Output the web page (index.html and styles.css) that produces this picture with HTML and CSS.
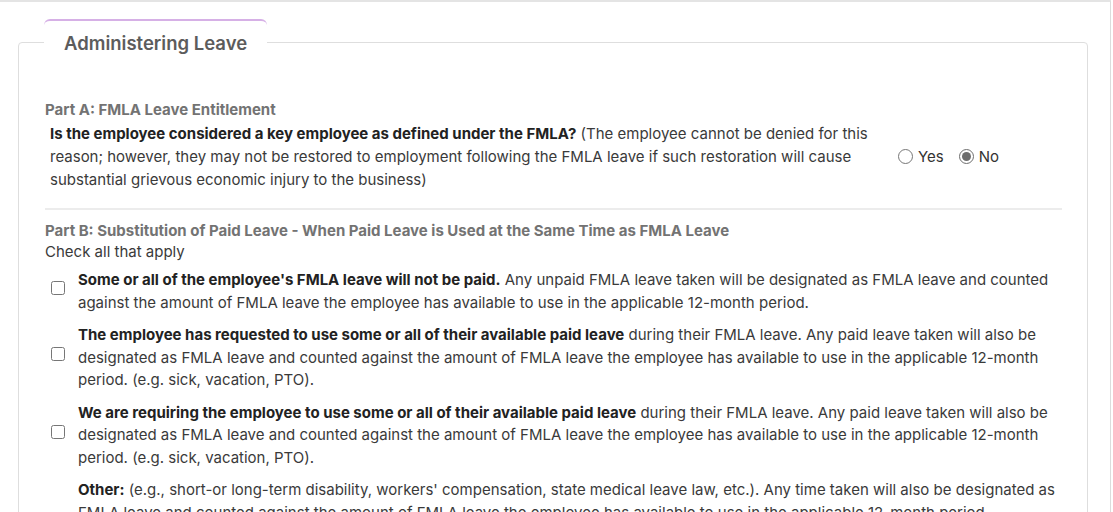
FILE: index.html
```html
<!DOCTYPE html>
<html lang="en">
<head>
  <meta charset="UTF-8" />
  <title>Administering Leave</title>
  <link rel="stylesheet" href="styles.css">
</head>
<body>
  <div class="pagina">
    <fieldset class="secao">
      <legend class="aba">Administering Leave</legend>

      <div class="parte">
        <div class="parte-titulo">Part A: FMLA Leave Entitlement</div>
        <div class="pergunta">
          <div class="pergunta-texto">
            <b>Is the employee considered a key employee as defined under the FMLA?</b>
            (The employee cannot be denied for this reason; however, they may not be restored to employment following the FMLA leave if such restoration will cause substantial grievous economic injury to the business)
          </div>
          <div class="opcoes">
            <label class="opcao"><input type="radio" name="chave" value="sim"> Yes</label>
            <label class="opcao"><input type="radio" name="chave" value="nao" checked> No</label>
          </div>
        </div>
      </div>

      <div class="divisor"></div>

      <div class="parte">
        <div class="parte-titulo">Part B: Substitution of Paid Leave - When Paid Leave is Used at the Same Time as FMLA Leave</div>
        <div class="dica">Check all that apply</div>

        <div class="itens">
          <label class="item">
            <input type="checkbox">
            <span><b>Some or all of the employee's FMLA leave will not be paid.</b> Any unpaid FMLA leave taken will be designated as FMLA leave and counted against the amount of FMLA leave the employee has available to use in the applicable 12-month period.</span>
          </label>
          <label class="item">
            <input type="checkbox">
            <span><b>The employee has requested to use some or all of their available paid leave</b> during their FMLA leave. Any paid leave taken will also be designated as FMLA leave and counted against the amount of FMLA leave the employee has available to use in the applicable 12-month period. (e.g. sick, vacation, PTO).</span>
          </label>
          <label class="item">
            <input type="checkbox">
            <span><b>We are requiring the employee to use some or all of their available paid leave</b> during their FMLA leave. Any paid leave taken will also be designated as FMLA leave and counted against the amount of FMLA leave the employee has available to use in the applicable 12-month period. (e.g. sick, vacation, PTO).</span>
          </label>
          <div class="item">
            <input type="checkbox">
            <div class="item-outro">
              <span><b>Other:</b> (e.g., short-or long-term disability, workers' compensation, state medical leave law, etc.). Any time taken will also be designated as FMLA leave and counted against the amount of FMLA leave the employee has available to use in the applicable 12-month period.</span>
              <input type="text" class="campo">
            </div>
          </div>
        </div>
      </div>
    </fieldset>
  </div>
</body>
</html>
```

FILE: styles.css
```css
body {
  margin: 0;
  background-color: #fff;
  color: #3a3a3a;
  font-family: Inter, "Noto Sans", sans-serif;
  font-size: 15px;
}

.pagina {
  width: 1111px;
  height: 512px;
  box-sizing: border-box;
  border-top: 2px solid #e4e4e4;
  border-right: 1px solid #dcdcdc;
  padding: 17px 22px 0 18px;
  overflow: hidden;
}

.secao {
  margin: 0;
  border: 1px solid #dedede;
  border-radius: 4px;
  padding: 35px 25px 40px 26px;
}

.aba {
  margin-left: -1px;
  padding: 11px 20px 11px 20px;
  background: #fff;
  border-top: 2px solid #d6b0e6;
  border-radius: 6px 6px 0 0;
  font-size: 18.5px;
  line-height: 22px;
  font-weight: 600;
  color: #5c5c5c;
}

.parte-titulo {
  font-weight: 700;
  color: #737373;
  line-height: 20px;
}

.pergunta {
  display: flex;
  align-items: center;
  margin-top: 2px;
  padding-left: 5px;
}

.pergunta-texto {
  width: 825px;
  line-height: 23px;
}

b {
  font-weight: 700;
  color: #222;
}

.opcoes {
  display: flex;
  gap: 15px;
  margin-left: 23px;
}

.opcao {
  display: flex;
  align-items: center;
  gap: 4px;
  color: #333;
}

.opcao input {
  margin: 0 1px 0 0;
  width: 15px;
  height: 15px;
  accent-color: #6e6e6e;
}

.divisor {
  height: 2px;
  background: #ececec;
  margin: 17px 0 11px 0;
}

.dica {
  line-height: 22px;
}

.itens {
  display: flex;
  flex-direction: column;
  gap: 10px;
  margin-top: 6px;
}

.item {
  display: flex;
  align-items: center;
  line-height: 22.5px;
}

.item input[type="checkbox"] {
  flex: none;
  margin: 0 13px 7px 6px;
  width: 14px;
  height: 14px;
}

.item-outro {
  display: flex;
  flex-direction: column;
  gap: 8px;
  flex: 1;
}

.campo {
  height: 36px;
  box-sizing: border-box;
  border: 1px solid #ccc;
  border-radius: 4px;
  font: inherit;
}
```
